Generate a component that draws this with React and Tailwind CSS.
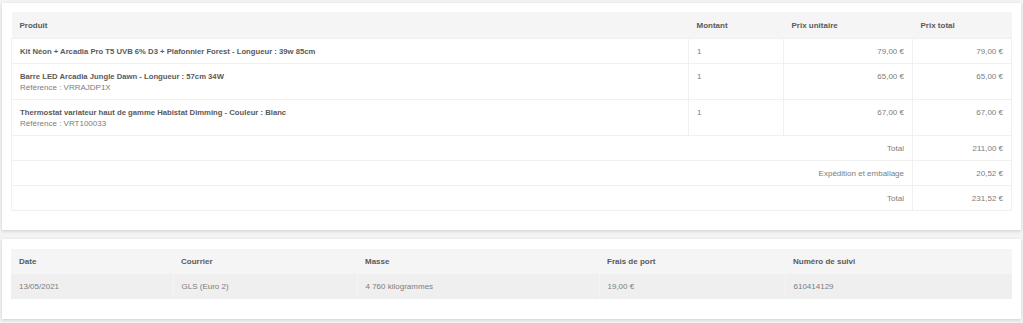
import React from "react";

const items = [
  { name: "Kit Néon + Arcadia Pro T5 UVB 6% D3 + Plafonnier Forest - Longueur : 39w 85cm", ref: null, qty: "1", unit: "79,00 €", total: "79,00 €" },
  { name: "Barre LED Arcadia Jungle Dawn - Longueur : 57cm 34W", ref: "VRRAJDP1X", qty: "1", unit: "65,00 €", total: "65,00 €" },
  { name: "Thermostat variateur haut de gamme Habistat Dimming - Couleur : Blanc", ref: "VRT100033", qty: "1", unit: "67,00 €", total: "67,00 €" },
];

const sums = [
  ["Total", "211,00 €"],
  ["Expédition et emballage", "20,52 €"],
  ["Total", "231,52 €"],
];

export default function App() {
  const font = { fontFamily: '"Liberation Sans", Arial, sans-serif' };
  return (
    <div className="min-h-screen bg-[#f3f3f3] px-[2px] pt-[3px] pb-[4px] text-[8px] leading-[11px] text-[#7d7d7d]" style={font}>
      <div className="bg-white px-[9px] pt-[9px] pb-[19px] shadow-[0_1px_3px_rgba(0,0,0,0.16)]">
        <table className="w-full border-collapse">
          <thead>
            <tr className="bg-[#f5f5f5] text-left text-[#5a5a5a]">
              <th className="px-[8px] py-[7.5px] font-bold">Produit</th>
              <th className="w-[95px] px-[8px] py-[7.5px] font-bold">Montant</th>
              <th className="w-[129px] px-[8px] py-[7.5px] font-bold">Prix unitaire</th>
              <th className="w-[99px] px-[8px] py-[7.5px] font-bold">Prix total</th>
            </tr>
          </thead>
          <tbody>
            {items.map((it, i) => (
              <tr key={i} className="align-top">
                <td className="border border-[#f0f0f0] px-[8px] py-[6.5px]">
                  <div className="text-[7.7px] font-bold text-[#5a5a5a]">{it.name}</div>
                  {it.ref && <div>Référence : {it.ref}</div>}
                </td>
                <td className="border border-[#f0f0f0] px-[8px] py-[6.5px]">{it.qty}</td>
                <td className="border border-[#f0f0f0] px-[8px] py-[6.5px] text-right">{it.unit}</td>
                <td className="border border-[#f0f0f0] px-[8px] py-[6.5px] text-right">{it.total}</td>
              </tr>
            ))}
            {sums.map(([l, v], i) => (
              <tr key={"s" + i}>
                <td colSpan={3} className="border border-[#f0f0f0] px-[8px] py-[6.5px] text-right">{l}</td>
                <td className="border border-[#f0f0f0] px-[8px] py-[6.5px] text-right">{v}</td>
              </tr>
            ))}
          </tbody>
        </table>
      </div>

      <div className="mt-[9px] bg-white px-[9px] pt-[10px] pb-[20px] shadow-[0_1px_3px_rgba(0,0,0,0.16)]">
        <table className="w-full border-collapse">
          <thead>
            <tr className="bg-[#f5f5f5] text-left text-[#5a5a5a]">
              <th className="w-[162px] px-[8px] py-[7px] font-bold">Date</th>
              <th className="w-[184px] px-[8px] py-[7px] font-bold">Courrier</th>
              <th className="w-[242px] px-[8px] py-[7px] font-bold">Masse</th>
              <th className="w-[186px] px-[8px] py-[7px] font-bold">Frais de port</th>
              <th className="px-[8px] py-[7px] font-bold">Numéro de suivi</th>
            </tr>
          </thead>
          <tbody>
            <tr className="bg-[#efefef]">
              <td className="border-r border-[#f4f4f4] px-[8px] py-[7px]">13/05/2021</td>
              <td className="border-r border-[#f4f4f4] px-[8px] py-[7px]">GLS (Euro 2)</td>
              <td className="border-r border-[#f4f4f4] px-[8px] py-[7px]">4 760 kilogrammes</td>
              <td className="border-r border-[#f4f4f4] px-[8px] py-[7px]">19,00 €</td>
              <td className="px-[8px] py-[7px]">610414129</td>
            </tr>
          </tbody>
        </table>
      </div>
    </div>
  );
}
